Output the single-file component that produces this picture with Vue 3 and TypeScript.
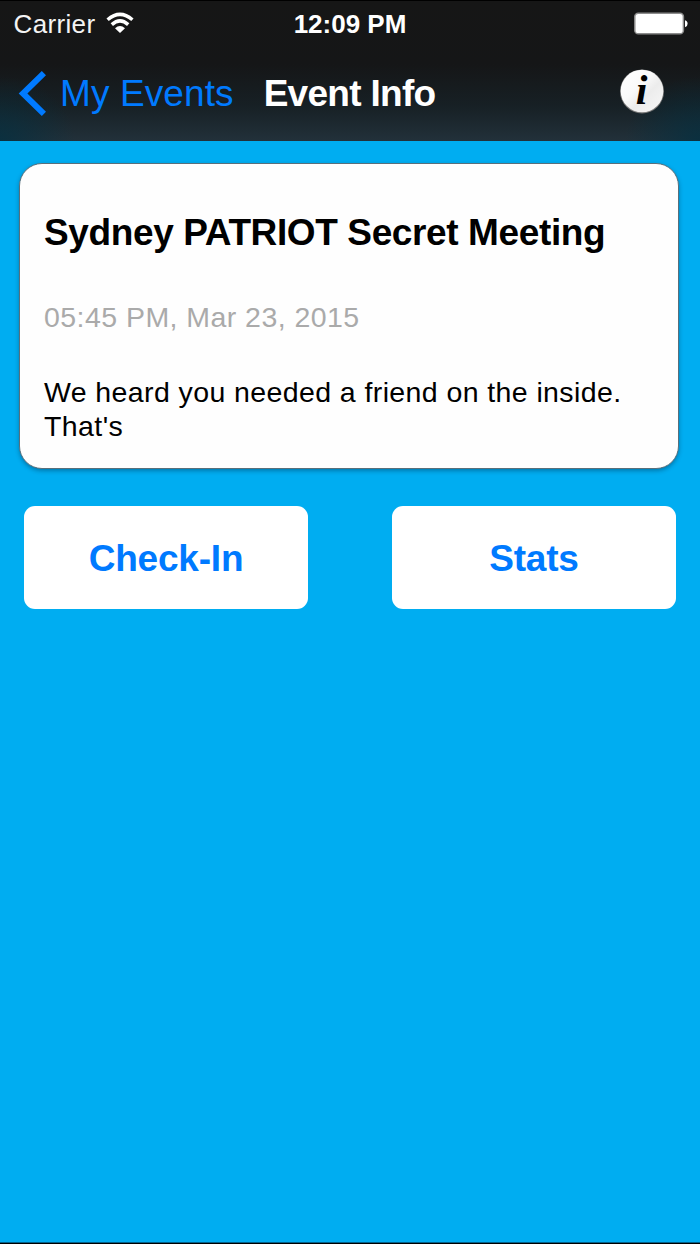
<script setup lang="ts">
interface EventInfo {
  title: string
  date: string
  description: string
}

const event: EventInfo = {
  title: 'Sydney PATRIOT Secret Meeting',
  date: '05:45 PM, Mar 23, 2015',
  description: "We heard you needed a friend on the inside. That's",
}
</script>

<template>
  <div class="screen">
    <header class="top">
      <div class="status">
        <div class="carrier">
          <span>Carrier</span>
          <svg class="wifi" width="28" height="22" viewBox="0 0 28 22">
            <g fill="none" stroke="#fff" stroke-width="3.5">
              <path d="M1.6 7.8Q14 -3 26.4 7.8" />
              <path d="M5.8 12.6Q14 5.2 22.2 12.6" />
            </g>
            <path d="M9 16.2Q14 12 19 16.2L14 21Z" fill="#fff" />
          </svg>
        </div>
        <div class="time">12:09 PM</div>
        <svg class="battery" width="54" height="24" viewBox="0 0 54 24">
          <rect x="0.8" y="1.2" width="48.6" height="20.6" rx="3.4" fill="#fff" stroke="#8c8c8c" stroke-width="1.5" />
          <path d="M51 8.2Q53.6 8.8 53.6 11.7T51 15.2Z" fill="#fff" />
        </svg>
      </div>
      <nav class="nav">
        <a class="back">
          <svg width="30" height="48" viewBox="0 0 30 48">
            <path d="M25.9 3.1L5 23.5L25.9 43.9" fill="none" stroke="#007aff" stroke-width="6" />
          </svg>
          <span>My Events</span>
        </a>
        <h1>Event Info</h1>
        <svg class="info" width="48" height="48" viewBox="0 0 48 48">
          <defs>
            <linearGradient id="disc" x1="0" y1="0" x2="1" y2="1">
              <stop offset="0" stop-color="#fff" />
              <stop offset="0.4" stop-color="#fafafa" />
              <stop offset="0.6" stop-color="#ececec" />
              <stop offset="1" stop-color="#f8f8f8" />
            </linearGradient>
          </defs>
          <circle cx="24" cy="24.4" r="22" fill="#777" />
          <circle cx="24" cy="24" r="21.3" fill="url(#disc)" />
          <text x="17.8" y="37.4" class="glyph">i</text>
        </svg>
      </nav>
    </header>

    <main>
      <section class="card">
        <h2>{{ event.title }}</h2>
        <p class="date">{{ event.date }}</p>
        <p class="desc">{{ event.description }}</p>
      </section>
      <div class="actions">
        <button type="button">Check-In</button>
        <button type="button">Stats</button>
      </div>
    </main>
  </div>
</template>

<style>
body {
  margin: 0;
}
</style>

<style scoped>
.screen {
  box-sizing: border-box;
  width: 700px;
  height: 1244px;
  overflow: hidden;
  background: #00adf1;
  border-bottom: 1px solid #000;
  box-shadow: inset 0 -1px #02608a;
  font-family: "Liberation Sans", Arial, sans-serif;
}
.top {
  box-sizing: border-box;
  height: 141px;
  border-top: 1px solid #000;
  background:
    radial-gradient(ellipse 75px 65px at 0 100%, rgba(5, 48, 65, 0.8), rgba(5, 48, 65, 0)),
    radial-gradient(ellipse 75px 65px at 100% 100%, rgba(5, 48, 65, 0.8), rgba(5, 48, 65, 0)),
    linear-gradient(#161616 0%, #151617 45%, #172025 75%, #22313a 100%);
}
.status {
  display: grid;
  grid-template-columns: 1fr auto 1fr;
  height: 47px;
  line-height: 47px;
  padding: 0 12.5px;
  color: #fff;
  font-size: 26px;
}
.carrier {
  display: flex;
  gap: 11px;
  padding-left: 1px;
  letter-spacing: 0.35px;
  color: #f4f4f4;
}
.wifi {
  margin-top: 11px;
}
.time {
  font-weight: bold;
}
.battery {
  justify-self: end;
  margin-top: 11px;
}
.nav {
  box-sizing: border-box;
  display: flex;
  align-items: center;
  height: 93px;
  padding: 0 34px 1px 18px;
  font-size: 37px;
}
.back {
  display: flex;
  align-items: center;
  gap: 12px;
  color: #007aff;
  letter-spacing: 0.1px;
}
h1 {
  margin: 0 0 0 30px;
  font-size: 37px;
  color: #fff;
  letter-spacing: -0.7px;
}
.info {
  margin: -7px 0 0 auto;
}
.glyph {
  font: italic bold 42px "Liberation Serif", serif;
  fill: #000;
}
.card {
  box-sizing: border-box;
  width: 660px;
  height: 306px;
  margin: 22px 0 0 19px;
  padding: 47px 24px 0;
  border: 1px solid #596f7b;
  border-radius: 23px;
  background: #fefefe;
  box-shadow: 0 2px 4px rgba(0, 45, 75, 0.4);
}
h2,
p {
  margin: 0;
}
h2 {
  font-size: 37px;
  line-height: 44px;
  letter-spacing: -0.38px;
  white-space: nowrap;
}
.date {
  margin-top: 45px;
  font-size: 28.5px;
  line-height: 34px;
  letter-spacing: 0.45px;
  color: #aaa;
}
.desc {
  margin-top: 42px;
  font-size: 28.5px;
  line-height: 33.5px;
  letter-spacing: 0.4px;
}
.actions {
  display: flex;
  justify-content: space-between;
  margin-top: 37px;
  padding: 0 24px;
}
button {
  width: 284px;
  height: 103px;
  padding: 2px 0 0;
  border: 0;
  border-radius: 11px;
  background: #fff;
  color: #007aff;
  font: bold 37px "Liberation Sans", Arial, sans-serif;
  letter-spacing: -0.2px;
}
</style>
